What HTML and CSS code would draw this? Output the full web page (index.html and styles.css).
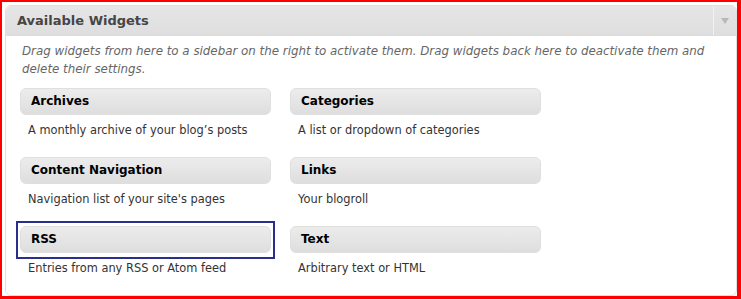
FILE: index.html
```html
<!DOCTYPE html>
<html>
<head>
<meta charset="utf-8">
<link rel="stylesheet" href="styles.css">
</head>
<body>
<div class="frame">
  <div class="box">
    <div class="box-head">
      <h3 class="box-title">Available Widgets</h3>
      <div class="toggle"><span class="arrow"></span></div>
    </div>
    <div class="box-body">
      <p class="intro">Drag widgets from here to a sidebar on the right to activate them. Drag widgets back here to deactivate them and delete their settings.</p>
      <div class="widgets">
        <div class="widget">
          <div class="widget-top">Archives</div>
          <div class="widget-desc">A monthly archive of your blog’s posts</div>
        </div>
        <div class="widget">
          <div class="widget-top">Categories</div>
          <div class="widget-desc">A list or dropdown of categories</div>
        </div>
        <div class="widget">
          <div class="widget-top">Content Navigation</div>
          <div class="widget-desc">Navigation list of your site's pages</div>
        </div>
        <div class="widget">
          <div class="widget-top">Links</div>
          <div class="widget-desc">Your blogroll</div>
        </div>
        <div class="widget focused">
          <div class="widget-top">RSS</div>
          <div class="widget-desc">Entries from any RSS or Atom feed</div>
        </div>
        <div class="widget">
          <div class="widget-top">Text</div>
          <div class="widget-desc">Arbitrary text or HTML</div>
        </div>
      </div>
    </div>
  </div>
</div>
</body>
</html>
```
FILE: styles.css
```css
html, body {
  margin: 0;
  padding: 0;
  background: #fff;
}
body {
  font-family: "DejaVu Sans", Verdana, sans-serif;
}
.frame {
  width: 732px;
  height: 291px;
  border-style: solid;
  border-color: #ff0000;
  border-width: 2px 4px 3px 2px;
  padding: 3px 0 0 3px;
  box-sizing: content-box;
  background: #fff;
}
.box {
  width: 732px;
  height: 291px;
  box-sizing: border-box;
  border: 1px solid #dfdfdf;
  border-radius: 6px;
  overflow: hidden;
  background: #fff;
}
.box-head {
  display: flex;
  height: 29px;
  background: linear-gradient(#e6e6e6, #dedede);
  border-bottom: 1px solid #dcdcdc;
}
.box-title {
  flex: 1;
  margin: 0;
  padding: 0 0 0 11px;
  font-size: 13px;
  font-weight: bold;
  line-height: 29px;
  color: #464646;
}
.toggle {
  width: 23px;
  border-left: 1px solid #f2f2f2;
  display: flex;
  justify-content: center;
  padding-top: 12px;
  box-sizing: border-box;
}
.arrow {
  width: 0;
  height: 0;
  border-left: 4px solid transparent;
  border-right: 4px solid transparent;
  border-top: 6px solid #b8b8b8;
}
.box-body {
  padding: 0 0 0 14px;
}
.intro {
  margin: 6px 0 10px 2px;
  font-size: 11.85px;
  font-style: italic;
  line-height: 18px;
  color: #666;
}
.widgets {
  display: grid;
  grid-template-columns: 251px 251px;
  column-gap: 19px;
  row-gap: 0;
}
.widget {
  height: 69px;
  position: relative;
}
.widget-top {
  height: 27px;
  box-sizing: border-box;
  border: 1px solid #dfdfdf;
  border-radius: 6px;
  background: linear-gradient(#ececec, #dedede);
  padding-left: 10px;
  font-size: 12px;
  font-weight: bold;
  line-height: 25px;
  color: #000;
}
.widget-desc {
  padding: 5px 0 0 8px;
  font-size: 11.4px;
  line-height: 20px;
  color: #333;
}
.focused::before {
  content: "";
  position: absolute;
  left: -4px;
  top: -5px;
  width: 255px;
  height: 34px;
  border: 2px solid #2a2e8c;
  pointer-events: none;
}
```
